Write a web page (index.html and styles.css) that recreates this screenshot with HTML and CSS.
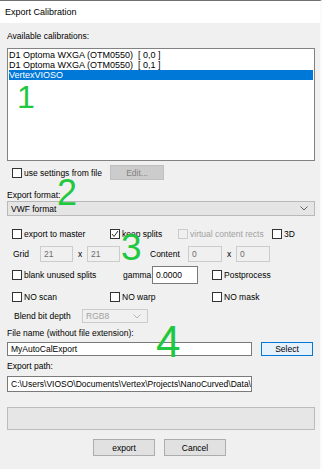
FILE: index.html
```html
<!DOCTYPE html>
<html lang="en">
<head>
    <meta charset="UTF-8">
    <title>Export Calibration</title>
    <link rel="stylesheet" href="styles.css">
</head>
<body>
    <div class="window">
        <div class="titlebar">Export Calibration</div>

        <div class="content">
            <div class="label top">Available calibrations:</div>
            <div class="listbox">
                <div class="item">D1 Optoma WXGA (OTM0550)  [ 0,0 ]</div>
                <div class="item">D1 Optoma WXGA (OTM0550)  [ 0,1 ]</div>
                <div class="item selected">VertexVIOSO</div>
            </div>

            <div class="row settings-row">
                <label class="check w-settings"><span class="box"></span>use settings from file</label>
                <button class="btn btn-disabled edit-btn">Edit...</button>
            </div>

            <div class="label format-label">Export format:</div>
            <div class="combo">
                <span>VWF format</span>
                <svg class="chevron" width="8" height="5" viewBox="0 0 8 5"><path d="M0.5 0.5 L4 4 L7.5 0.5" fill="none" stroke="#606060" stroke-width="1"/></svg>
            </div>

            <div class="row checks-row">
                <label class="check w98"><span class="box"></span>export to master</label>
                <label class="check w68"><span class="box checked">
                    <svg width="8" height="8" viewBox="0 0 8 8"><path d="M1 4 L3 6.5 L7 1" fill="none" stroke="#333" stroke-width="1"/></svg>
                </span>keep splits</label>
                <label class="check w94 disabled"><span class="box"></span>virtual content rects</label>
                <label class="check"><span class="box"></span>3D</label>
            </div>

            <div class="row grid-row">
                <span class="grid-label">Grid</span>
                <span class="field field-disabled w33">21</span>
                <span class="times">x</span>
                <span class="field field-disabled w33">21</span>
                <span class="content-label">Content</span>
                <span class="field field-disabled w34">0</span>
                <span class="times">x</span>
                <span class="field field-disabled w34">0</span>
            </div>

            <div class="row blank-row">
                <label class="check w111"><span class="box"></span>blank unused splits</label>
                <span class="gamma-label">gamma</span>
                <span class="field gamma-field">0.0000</span>
                <label class="check postprocess"><span class="box"></span>Postprocess</label>
            </div>

            <div class="row no-row">
                <label class="check w98"><span class="box"></span>NO scan</label>
                <label class="check w102"><span class="box"></span>NO warp</label>
                <label class="check"><span class="box"></span>NO mask</label>
            </div>

            <div class="row blend-row">
                <span class="blend-label">Blend bit depth</span>
                <span class="combo combo-disabled">
                    <span>RGB8</span>
                    <svg class="chevron" width="8" height="5" viewBox="0 0 8 5"><path d="M0.5 0.5 L4 4 L7.5 0.5" fill="none" stroke="#b5b5b5" stroke-width="1"/></svg>
                </span>
            </div>

            <div class="label file-label">File name (without file extension):</div>
            <div class="row file-row">
                <span class="field file-field">MyAutoCalExport</span>
                <button class="btn btn-focus select-btn">Select</button>
            </div>

            <div class="label path-label">Export path:</div>
            <div class="field path-field"><span class="path-text">C:\Users\VIOSO\Documents\Vertex\Projects\NanoCurved\Data\Ca</span></div>

            <div class="progress"></div>

            <div class="row actions">
                <button class="btn action-btn">export</button>
                <button class="btn action-btn">Cancel</button>
            </div>
        </div>

        <!-- annotation numbers drawn over the dialog -->
        <span class="mark mark-1">1</span>
        <span class="mark mark-2">2</span>
        <span class="mark mark-3">3</span>
        <span class="mark mark-4">4</span>
    </div>
</body>
</html>
```

FILE: styles.css
```css
body {
    margin: 0;
    background: #fff;
    font-family: "Liberation Sans", Arial, sans-serif;
    font-size: 8.5px;
    color: #000;
}
.window {
    position: relative;
    width: 322px;
    height: 469px;
    box-sizing: border-box;
    border-top: 1px solid #707070;
    border-right: 2px solid #fafafa;
    background: #f0f0f0;
    overflow: hidden;
}
.titlebar {
    height: 22px;
    line-height: 22px;
    padding-left: 5px;
    background: #fff;
    font-size: 9px;
}
.content {
    width: 308px;
    padding: 0 7px;
}
.label {
    height: 12px;
    line-height: 12px;
}
.label.top {
    margin-top: 7px;
}
.listbox {
    margin-top: 6px;
    height: 113px;
    box-sizing: border-box;
    border: 1px solid #828282;
    background: #fff;
    padding: 1px;
    font-size: 9px;
}
.item {
    height: 10px;
    line-height: 10px;
    white-space: pre;
}
.item.selected {
    background: #0078d7;
    color: #fff;
}
.row {
    display: flex;
    align-items: center;
}
.check {
    display: flex;
    align-items: center;
    gap: 2px;
    white-space: nowrap;
}
.box {
    width: 10px;
    height: 10px;
    flex: none;
    box-sizing: border-box;
    border: 1px solid #333;
    background: #fff;
    display: flex;
    align-items: center;
    justify-content: center;
}
.check.disabled {
    color: #a0a0a0;
}
.check.disabled .box {
    border-color: #cccccc;
    background: #f0f0f0;
}
.btn {
    font-family: inherit;
    font-size: 8.5px;
    padding: 0;
    box-sizing: border-box;
    border: 1px solid #adadad;
    background: #e1e1e1;
    color: #000;
}
.btn-disabled {
    background: #cccccc;
    border-color: #bfbfbf;
    color: #838383;
}
.btn-focus {
    background: #e5f1fb;
    border-color: #0078d7;
}
.settings-row {
    margin-top: 4px;
    height: 15px;
    padding-left: 5px;
}
.w-settings {
    width: 98px;
}
.edit-btn {
    width: 54px;
    height: 15px;
}
.format-label {
    margin-top: 9px;
}
.combo {
    height: 15px;
    box-sizing: border-box;
    border: 1px solid #b9b9b9;
    background: #e5e5e5;
    display: flex;
    align-items: center;
    justify-content: space-between;
    padding: 0 6px 0 3px;
}
.chevron {
    display: block;
}
.checks-row {
    margin-top: 13px;
    height: 10px;
    padding-left: 5px;
}
.w98 { width: 98px; }
.w68 { width: 68px; }
.w94 { width: 94px; }
.w102 { width: 102px; }
.w111 { width: 111px; }
.w33 { width: 33px; }
.w34 { width: 34px; }
.field {
    box-sizing: border-box;
    border: 1px solid #7a7a7a;
    background: #fff;
    padding-left: 3px;
    display: flex;
    align-items: center;
    white-space: nowrap;
    overflow: hidden;
}
.field-disabled {
    height: 16px;
    border-color: #cccccc;
    background: #f0f0f0;
    color: #6d6d6d;
}
.grid-row {
    margin-top: 7px;
    height: 16px;
}
.grid-label {
    width: 27px;
    margin-left: 6px;
}
.times {
    width: 14px;
    text-align: center;
}
.content-label {
    width: 38px;
    margin-left: 30px;
}
.blank-row {
    margin-top: 4px;
    height: 18px;
    padding-left: 5px;
}
.gamma-label {
    width: 29px;
}
.gamma-field {
    width: 46px;
    height: 18px;
}
.postprocess {
    margin-left: 14px;
}
.no-row {
    margin-top: 8px;
    height: 10px;
    padding-left: 5px;
}
.blend-row {
    margin-top: 7px;
    height: 14px;
}
.blend-label {
    width: 68px;
    margin-left: 7px;
}
.combo-disabled {
    width: 66px;
    height: 14px;
    border-color: #cccccc;
    background: #f0f0f0;
    color: #a0a0a0;
}
.file-label {
    margin-top: 4px;
}
.file-row {
    margin-top: 3px;
    height: 14px;
}
.file-field {
    width: 245px;
    height: 14px;
}
.select-btn {
    width: 52px;
    height: 14px;
    margin-left: 9px;
}
.path-label {
    margin-top: 4px;
}
.path-field {
    margin-top: 4px;
    width: 245px;
    height: 16px;
}
.path-text {
    flex: none;
}
.progress {
    margin-top: 15px;
    height: 23px;
    box-sizing: border-box;
    border: 1px solid #bcbcbc;
    background: #e6e6e6;
}
.actions {
    margin-top: 9px;
    padding-left: 86px;
    gap: 9px;
}
.action-btn {
    width: 62px;
    height: 17px;
}
.mark {
    position: absolute;
    line-height: 1;
    color: #1fc83f;
    font-family: "Liberation Sans", Arial, sans-serif;
}
.mark-1 {
    left: 17px;
    top: 80px;
    font-size: 32px;
}
.mark-2 {
    left: 57px;
    top: 174px;
    font-size: 36px;
}
.mark-3 {
    left: 121px;
    top: 228px;
    font-size: 37px;
}
.mark-4 {
    left: 156px;
    top: 319px;
    font-size: 44px;
}
```
